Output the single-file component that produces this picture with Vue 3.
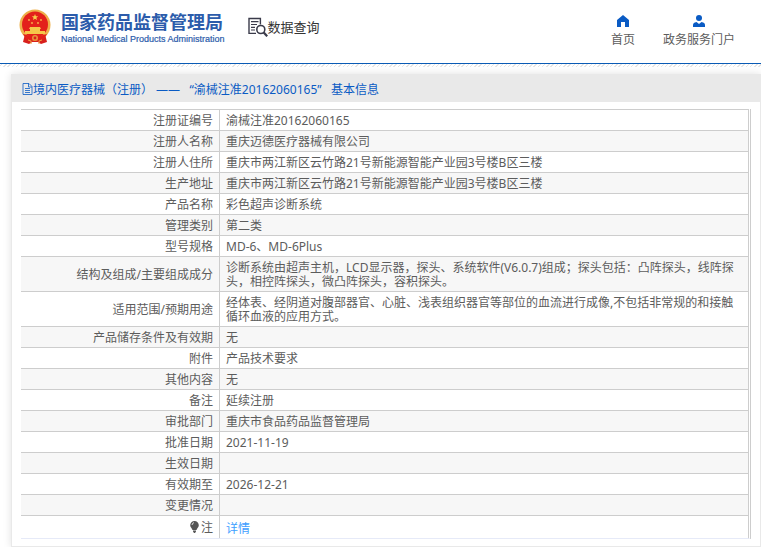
<script setup>
const rows = [
  ['注册证编号', '渝械注准20162060165'],
  ['注册人名称', '重庆迈德医疗器械有限公司'],
  ['注册人住所', '重庆市两江新区云竹路21号新能源智能产业园3号楼B区三楼'],
  ['生产地址', '重庆市两江新区云竹路21号新能源智能产业园3号楼B区三楼'],
  ['产品名称', '彩色超声诊断系统'],
  ['管理类别', '第二类'],
  ['型号规格', 'MD-6、MD-6Plus'],
  ['结构及组成/主要组成成分', '诊断系统由超声主机，LCD显示器，探头、系统软件(V6.0.7)组成；探头包括：凸阵探头，线阵探头，相控阵探头，微凸阵探头，容积探头。'],
  ['适用范围/预期用途', '经体表、经阴道对腹部器官、心脏、浅表组织器官等部位的血流进行成像,不包括非常规的和接触循环血液的应用方式。'],
  ['产品储存条件及有效期', '无'],
  ['附件', '产品技术要求'],
  ['其他内容', '无'],
  ['备注', '延续注册'],
  ['审批部门', '重庆市食品药品监督管理局'],
  ['批准日期', '2021-11-19'],
  ['生效日期', ''],
  ['有效期至', '2026-12-21'],
  ['变更情况', ''],
]
</script>

<template>
  <div class="page">
    <header class="header">
      <a class="brand" href="#">
        <svg class="emblem" viewBox="0 0 32 36" aria-hidden="true">
          <path d="M6 25h20l2 8-6 2-3-2h-6l-3 2-6-2z" fill="#d8201c" />
          <circle cx="16" cy="16" r="15.5" fill="#eeb04a" />
          <circle cx="16" cy="15.500" r="13" fill="#e3201b" />
          <path d="M16 5l.9 2.200 2.300.1-1.800 1.500.6 2.300-2-1.300-2 1.300.6-2.300-1.800-1.500 2.300-.1z" fill="#f8cf4c" />
          <g fill="#f8b84c">
            <circle cx="10" cy="11" r=".9" /><circle cx="22" cy="11" r=".9" />
            <circle cx="13" cy="14" r=".9" /><circle cx="19" cy="14" r=".9" />
          </g>
          <path d="M11 18h10l1 2h-1v2h5v3H6v-3h5v-2h-1z" fill="#f6c64a" />
          <path d="M4 25q12 4 24 0l-3 5q-9 3-18 0z" fill="#e3201b" />
          <circle cx="16" cy="29" r="3" fill="#e8953c" />
          <circle cx="16" cy="29" r="1.400" fill="#d8201c" />
          <path d="M9 31l3 1v3M23 31l-3 1v3" fill="none" stroke="#f0a040" />
        </svg>
        <span class="names">
          <span class="cn">国家药品监督管理局</span>
          <span class="en">National Medical Products Administration</span>
        </span>
      </a>
      <div class="query">
        <svg width="20" height="20" viewBox="0 0 20 20" fill="none" stroke="#3a3b4a" aria-hidden="true">
          <path d="M8 16.400H1V1.500h11.400v6" stroke-width="1.400" />
          <path d="M3 4.700h7.500M3 7.500h6M3 10.300h4M3 13h4" stroke-width="1.200" />
          <circle cx="12.800" cy="12.500" r="4" stroke-width="1.600" />
          <path d="M15.700 15.500l3.500 3.800" stroke-width="2.200" />
        </svg>
        <span>数据查询</span>
      </div>
      <nav class="nav">
        <a href="#">
          <svg width="12" height="12" viewBox="0 0 12 12" aria-hidden="true"><path d="M6 0l6 5v7H8V7H4v5H0V5z" fill="#0a5bc4" /></svg>
          <span>首页</span>
        </a>
        <a href="#">
          <svg width="12" height="12" viewBox="0 0 12 12" aria-hidden="true"><circle cx="6" cy="3" r="3" fill="#0a5bc4" /><path d="M0 12v-2q0-2.500 3.500-3L6 9l2.500-2Q12 7.500 12 10v2z" fill="#0a5bc4" /></svg>
          <span>政务服务门户</span>
        </a>
      </nav>
    </header>
    <div class="hatch"></div>

    <main class="panel">
      <h1 class="title">
        <svg width="11" height="12" viewBox="0 0 11 12" fill="none" stroke="#0a5bc4" aria-hidden="true">
          <path d="M1 .5h6l3 3v8H1zM6.500.5v3.500h3.500M3 5.500h5M3 7.500h5M3 9.500h5" stroke-width=".8" />
        </svg>
        <span>境内医疗器械（注册） ——&nbsp;&nbsp; “渝械注准20162060165”&nbsp;&nbsp; 基本信息</span>
      </h1>
      <div class="body">
        <table class="info">
          <tbody>
            <tr v-for="row in rows" :key="row[0]">
              <th scope="row">{{ row[0] }}</th>
              <td>{{ row[1] }}</td>
            </tr>
            <tr class="note">
              <th scope="row">
                <svg width="9" height="12" viewBox="0 0 9 12" aria-hidden="true">
                  <path d="M4.500 0a4.300 4.300 0 0 1 4.300 4.300C8.800 6.500 6.800 7.500 6.500 9h-4C2.200 7.500.2 6.500.2 4.300A4.300 4.300 0 0 1 4.500 0zM3 9.600h3v1L5 12H4l-1-1.400z" fill="#555" />
                  <path d="M2 4q.2-2 2-2.400" fill="none" stroke="#fff" stroke-width=".8" />
                </svg>注
              </th>
              <td><a href="#">详情</a></td>
            </tr>
          </tbody>
        </table>
      </div>
    </main>
  </div>
</template>

<style>
body {
  margin: 0;
  background: #fff;
}
</style>

<style scoped>
.page {
  font-family: "Noto Sans", "Noto Sans CJK SC", sans-serif;
  font-size: 12px;
  color: #5c5c5c;
}
.page * {
  box-sizing: border-box;
}
a {
  text-decoration: none;
  color: inherit;
}
.header {
  display: flex;
  align-items: flex-start;
  height: 64px;
  padding: 9px 26px 0 19px;
  border-bottom: 1px solid #0a5bb5;
}
.brand {
  display: flex;
  gap: 10px;
  color: #2c5cab;
}
.emblem {
  width: 32px;
  height: 36px;
}
.names {
  display: flex;
  flex-direction: column;
  padding-top: 3px;
  white-space: nowrap;
}
.cn {
  font-size: 18px;
  line-height: 20px;
  font-weight: 700;
}
.en {
  font-family: "Liberation Sans", sans-serif;
  font-size: 9px;
  line-height: 15px;
  -webkit-text-stroke: 0.2px #2c5cab;
}
.query {
  display: flex;
  align-items: center;
  margin-left: 23px;
  padding-top: 8px;
  font-size: 13px;
  line-height: 20px;
  color: #333;
}
.nav {
  display: flex;
  gap: 28px;
  margin-left: auto;
  padding-top: 6px;
}
.nav a {
  display: flex;
  flex-direction: column;
  align-items: center;
  gap: 5px;
  line-height: 16px;
}
.hatch {
  height: 3px;
  background: repeating-linear-gradient(135deg, #fff 0 1px, #e6e6e6 1px 2px, #fff 2px 3px);
}
.panel {
  margin: 7px 0 0 11px;
  border: 1px solid #e9e9e9;
  box-shadow: 0 0 8px rgba(0, 0, 0, 0.12);
}
.title {
  display: flex;
  align-items: center;
  height: 27px;
  margin: 0;
  padding-left: 10px;
  background: #e9e9e9;
  color: #0a5bc4;
  font-size: 12px;
  font-weight: 400;
  white-space: nowrap;
}
.body {
  padding: 7px 9px;
}
.info {
  width: 100%;
  border-collapse: separate;
  border-spacing: 0;
  border-right: 3px double #cdcdcd;
  border-bottom: 1px solid #e6eaf8;
}
th,
td {
  height: 21px;
  padding: 4px 6px 2px;
  border-top: 1px solid #cdcdcd;
  font-weight: 400;
  line-height: 14px;
}
th {
  width: 199px;
  border-right: 1px solid #cdcdcd;
  text-align: right;
}
tr:nth-child(even) {
  background: #f7f7f7;
}
.note th,
.note td {
  height: 23px;
}
.note td {
  padding: 6px 6px 2px;
}
.note svg {
  margin-right: 2px;
  vertical-align: -1px;
}
.note a {
  color: #409eff;
}
</style>
